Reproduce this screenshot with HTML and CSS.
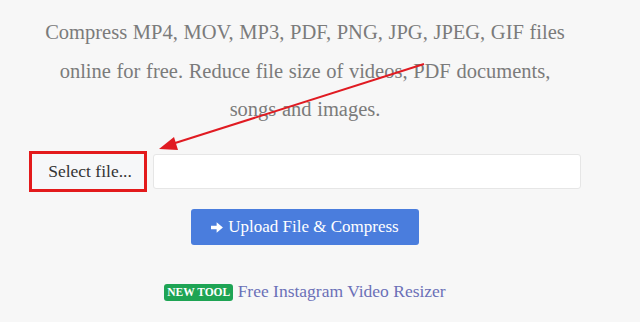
FILE: index.html
```html
<!DOCTYPE html>
<html lang="en">
<head>
    <meta charset="UTF-8">
    <meta name="viewport" content="width=device-width, initial-scale=1.0">
    <title>Compress files online</title>
    <link rel="stylesheet" href="styles.css">
</head>
<body>
    <div class="page">
        <p class="intro">Compress MP4, MOV, MP3, PDF, PNG, JPG, JPEG, GIF files online for free. Reduce file size of videos, PDF documents, songs and images.</p>

        <form class="upload-form">
            <div class="file-row">
                <label class="file-btn">Select file...</label>
                <input class="file-name" type="text">
            </div>
            <button class="upload-btn" type="button">
                <svg class="arrow-icon" viewBox="0 0 12 12" width="13" height="13">
                    <path d="M0 4.3h5.2V1.2L11 6l-5.8 4.8V7.7H0z" fill="#fff"/>
                </svg>
                Upload File &amp; Compress
            </button>
        </form>

        <p class="promo"><span class="badge">NEW TOOL</span> <a href="#">Free Instagram Video Resizer</a></p>
    </div>

    <!-- annotation arrow drawn on top of the page -->
    <svg class="annotation" width="640" height="322" viewBox="0 0 640 322">
        <line x1="424" y1="64" x2="172" y2="144" stroke="#e01b22" stroke-width="2"/>
        <path d="M159 149 L174 137 L178 150 Z" fill="#e01b22"/>
    </svg>
</body>
</html>
```

FILE: styles.css
```css
body {
    margin: 0;
    background: #f7f7f7;
    font-family: "Liberation Serif", "DejaVu Serif", serif;
    color: #777;
}

.page {
    width: 552px;
    margin-left: 29px;
    padding-top: 13px;
    text-align: center;
}

.intro {
    width: 530px;
    margin: 0 auto 22px;
    font-size: 20.5px;
    line-height: 38.5px;
    word-spacing: 0.5px;
    color: #7b7b7b;
}

.upload-form {
    display: flex;
    flex-direction: column;
    align-items: center;
}

.file-row {
    display: flex;
    align-items: center;
    width: 100%;
    gap: 6px;
}

.file-btn {
    width: 108px;
    height: 35px;
    padding-left: 4px;
    line-height: 35px;
    border: 3px solid #e31a1c;
    background: #f6f7f9;
    color: #333;
    font-size: 17.5px;
    text-align: center;
}

.file-name {
    flex: 1;
    height: 35px;
    box-sizing: border-box;
    border: 1px solid #e6e6e6;
    border-radius: 3px;
    background: #fff;
    outline: none;
}

.upload-btn {
    margin-top: 17px;
    width: 228px;
    height: 36px;
    border: none;
    border-radius: 3px;
    background: #4a7ddd;
    color: #fff;
    font-family: inherit;
    font-size: 17px;
    display: flex;
    align-items: center;
    justify-content: center;
    gap: 4px;
}

.arrow-icon {
    margin-top: 1px;
}

.promo {
    margin: 36px 0 0;
    font-size: 17.5px;
}

.badge {
    display: inline-block;
    padding: 2px 3px 3px;
    border-radius: 3px;
    background: #1ea454;
    color: #fff;
    font-size: 11.5px;
    font-weight: bold;
    vertical-align: 1px;
}

.promo a {
    color: #6b70b8;
    text-decoration: none;
}

.annotation {
    position: absolute;
    top: 0;
    left: 0;
    pointer-events: none;
}
```
